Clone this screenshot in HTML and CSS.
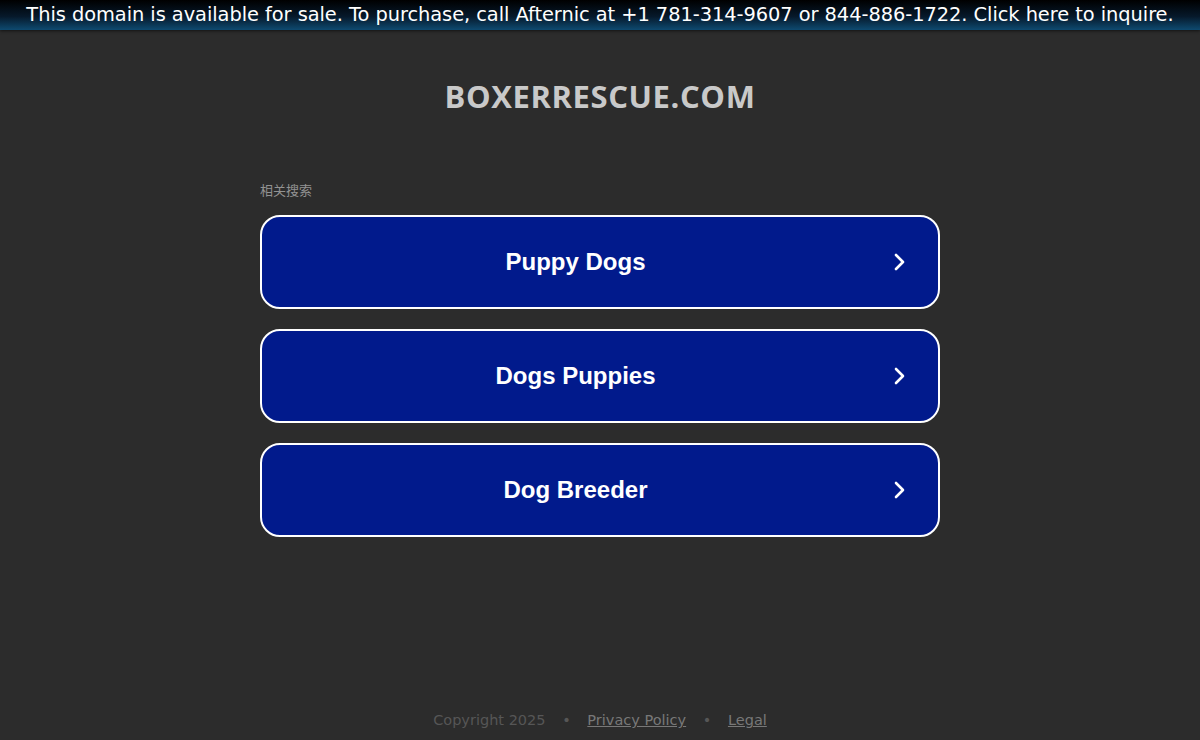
FILE: index.html
```html
<!DOCTYPE html>
<html lang="zh">
<head>
  <meta charset="UTF-8">
  <title>boxerrescue.com</title>
  <link rel="stylesheet" href="styles.css">
</head>
<body>
  <div class="sale-banner">This domain is available for sale. To purchase, call Afternic at +1 781-314-9607 or 844-886-1722. Click here to inquire.</div>

  <div class="page">
    <h1 class="domain">BOXERRESCUE.COM</h1>

    <div class="related">
      <div class="related-label">相关搜索</div>
      <a class="result" href="#"><span class="result-text">Puppy Dogs</span><svg class="chevron" viewBox="0 0 24 24"><path d="M9 5l7 7-7 7"/></svg></a>
      <a class="result" href="#"><span class="result-text">Dogs Puppies</span><svg class="chevron" viewBox="0 0 24 24"><path d="M9 5l7 7-7 7"/></svg></a>
      <a class="result" href="#"><span class="result-text">Dog Breeder</span><svg class="chevron" viewBox="0 0 24 24"><path d="M9 5l7 7-7 7"/></svg></a>
    </div>
  </div>

  <div class="footer">
    <span>Copyright 2025</span>
    <span class="dot">•</span>
    <a href="#">Privacy Policy</a>
    <span class="dot">•</span>
    <a href="#">Legal</a>
  </div>
</body>
</html>
```

FILE: styles.css
```css
/* Parked domain page */
html, body {
  height: 100%;
}

body {
  margin: 0;
  background: #2c2c2c;
  font-family: "Open Sans", Arial, sans-serif;
  display: flex;
  flex-direction: column;
}

.sale-banner {
  height: 30px;
  line-height: 29px;
  text-align: center;
  color: #fff;
  font-family: "DejaVu Sans", Verdana, sans-serif;
  font-size: 19.4px;
  letter-spacing: -0.05px;
  background: linear-gradient(to bottom, #000 0%, #06192b 55%, #0e4a70 100%);
  box-shadow: 0 1px 3px rgba(0, 0, 0, 0.6);
  white-space: nowrap;
  overflow: hidden;
}

.page {
  flex: 1;
  display: flex;
  flex-direction: column;
  align-items: center;
}

.domain {
  margin: 45px 0 0;
  font-size: 31px;
  font-weight: 700;
  color: #c9c9c9;
  letter-spacing: 0.6px;
}

.related {
  width: 680px;
  margin-top: 63px;
  display: flex;
  flex-direction: column;
  gap: 20px;
}

.related-label {
  font-family: "Noto Sans CJK SC", sans-serif;
  font-size: 13px;
  color: #929292;
  margin-bottom: -4px;
}

.result {
  box-sizing: border-box;
  height: 94px;
  border: 2px solid #fff;
  border-radius: 20px;
  background: #011a8c;
  color: #fff;
  text-decoration: none;
  display: flex;
  align-items: center;
  padding: 0 27px 0 0;
}

.result-text {
  flex: 1;
  text-align: center;
  font-family: "Liberation Sans", Arial, sans-serif;
  font-weight: 700;
  font-size: 24px;
  padding-left: 2px;
}

.chevron {
  width: 24px;
  height: 24px;
  fill: none;
  stroke: #fff;
  stroke-width: 2.6;
  stroke-linecap: round;
  stroke-linejoin: round;
}

.footer {
  text-align: center;
  padding-bottom: 12px;
  font-family: "DejaVu Sans", sans-serif;
  font-size: 14.5px;
  color: #565656;
}

.footer a {
  color: #787878;
}

.dot {
  margin: 0 12px;
}
```
